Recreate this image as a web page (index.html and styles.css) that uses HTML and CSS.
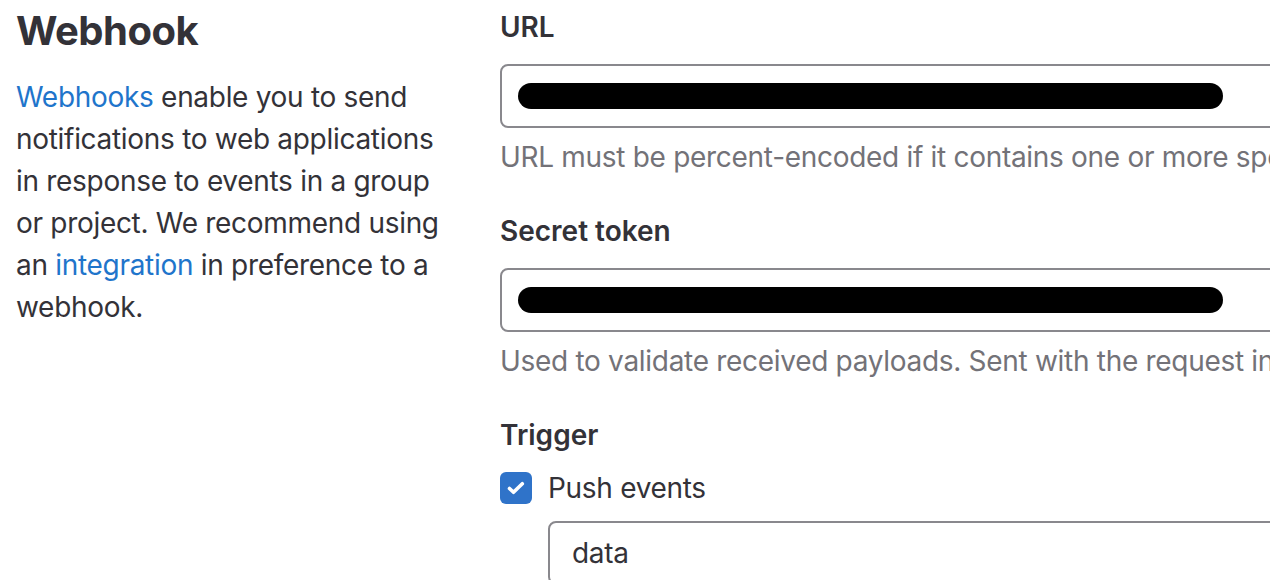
FILE: index.html
```html
<!DOCTYPE html>
<html lang="en">
<head>
  <meta charset="UTF-8">
  <title>Webhook</title>
  <link rel="stylesheet" href="styles.css">
</head>
<body>
  <div class="settings">
    <div class="intro">
      <h2>Webhook</h2>
      <p><a href="#">Webhooks</a> enable you to send notifications to web applications in response to events in a group or project. We recommend using an <a href="#">integration</a> in preference to a webhook.</p>
    </div>

    <div class="form">
      <div class="form-group">
        <label>URL</label>
        <div class="input"><span class="redacted"></span></div>
        <p class="help">URL must be percent-encoded if it contains one or more special characters.</p>
      </div>

      <div class="form-group">
        <label>Secret token</label>
        <div class="input"><span class="redacted"></span></div>
        <p class="help">Used to validate received payloads. Sent with the request in the X-Gitlab-Token HTTP header.</p>
      </div>

      <div class="form-group">
        <label>Trigger</label>
        <div class="check">
          <svg class="box" width="32" height="32" viewBox="0 0 32 32">
            <rect width="32" height="32" rx="6" fill="#2f73c9"/>
            <path d="M9.5 16.5l4 3.8 8.8-8.6" fill="none" stroke="#fff" stroke-width="3.6" stroke-linecap="round" stroke-linejoin="round"/>
          </svg>
          <span>Push events</span>
        </div>
        <div class="input sub">data</div>
      </div>
    </div>
  </div>
</body>
</html>
```

FILE: styles.css
```css
body {
  margin: 0;
  font-family: Inter, "Noto Sans", sans-serif;
  color: #333238;
  background: #fff;
  overflow: hidden;
}
.settings {
  display: flex;
  padding-left: 16px;
}
.intro {
  width: 436px;
  flex: none;
}
.intro h2 {
  margin: 7px 0 21px;
  font-size: 40px;
  line-height: 48px;
  font-weight: 700;
  letter-spacing: -0.5px;
}
.intro p {
  margin: 0;
  font-size: 28px;
  line-height: 42px;
  letter-spacing: -0.3px;
}
a {
  color: #1f75cb;
  text-decoration: none;
}
.form {
  margin-left: 48px;
  flex: 1;
  min-width: 0;
}
.form-group {
  margin-bottom: 32px;
}
.form-group:first-child {
  margin-top: 6px;
}
label {
  display: block;
  font-size: 28px;
  line-height: 42px;
  font-weight: 600;
  margin-bottom: 16px;
  white-space: nowrap;
}
.input {
  box-sizing: border-box;
  height: 64px;
  width: 900px;
  border: 2px solid #89888d;
  border-radius: 8px;
  padding: 0 16px;
  display: flex;
  align-items: center;
  font-size: 28px;
  letter-spacing: -0.3px;
}
.redacted {
  display: block;
  width: 705px;
  height: 26px;
  border-radius: 13px;
  background: #000;
}
.help {
  margin: 8px 0 0;
  font-size: 28px;
  line-height: 42px;
  color: #737278;
  letter-spacing: -0.3px;
  white-space: nowrap;
}
.check {
  display: flex;
  align-items: center;
  gap: 16px;
  margin-top: -5px;
  font-size: 28px;
  line-height: 42px;
  letter-spacing: -0.3px;
}
.box {
  flex: none;
  display: block;
}
.sub {
  margin: 12px 0 0 48px;
  padding: 0 22px;
}
```
